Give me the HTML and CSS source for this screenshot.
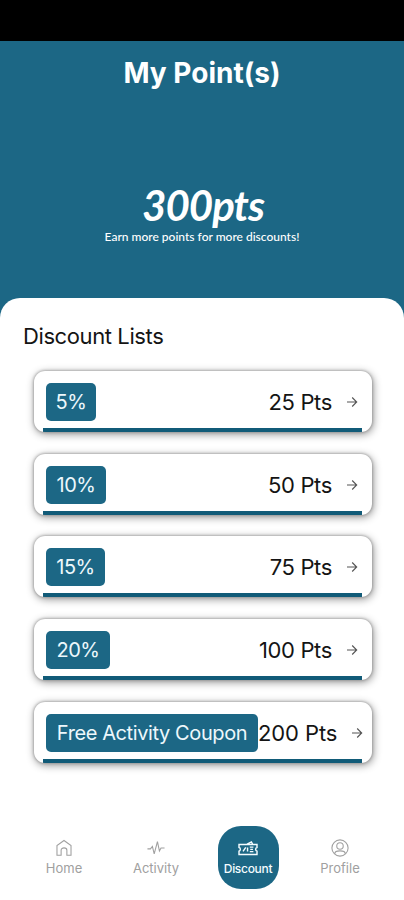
FILE: index.html
```
<!DOCTYPE html>
<html lang="en">
<head>
<meta charset="utf-8">
<title>My Point(s)</title>
<link rel="stylesheet" href="styles.css">
</head>
<body>
<svg class="defs" width="0" height="0"><symbol id="arrow" viewBox="0 0 12 12"><path d="M1 6h9.5M6.2 1.5L10.7 6l-4.5 4.5"/></symbol></svg>
<div class="status"></div>
<header class="hero">
  <h1>My Point(s)</h1>
  <div class="points">300pts</div>
  <p>Earn more points for more discounts!</p>
</header>
<main class="panel">
  <h2>Discount Lists</h2>
  <div class="list">
    <div class="card"><span class="tag five">5%</span><span class="cost">25 Pts</span><svg class="arrow"><use href="#arrow"/></svg></div>
    <div class="card"><span class="tag ten">10%</span><span class="cost">50 Pts</span><svg class="arrow"><use href="#arrow"/></svg></div>
    <div class="card"><span class="tag fifteen">15%</span><span class="cost">75 Pts</span><svg class="arrow"><use href="#arrow"/></svg></div>
    <div class="card"><span class="tag twenty">20%</span><span class="cost">100 Pts</span><svg class="arrow"><use href="#arrow"/></svg></div>
    <div class="card wide"><span class="tag coupon">Free Activity Coupon</span><span class="cost">200 Pts</span><svg class="arrow"><use href="#arrow"/></svg></div>
  </div>
</main>
<nav>
  <a class="item home"><svg viewBox="0 0 20 20"><path d="M2.2 18V7.3L10 1.6l7.8 5.7V18h-4.6v-5.6c0-3.4-6.4-3.4-6.4 0V18z"/></svg><span>Home</span></a>
  <a class="item activity"><svg viewBox="0 0 20 20"><path d="M.5 11h3.3L6 8.2l2 8.3L11.6 3l2.2 10.2L15.6 10h3.9"/></svg><span>Activity</span></a>
  <a class="item active"><svg viewBox="0 0 22 20"><path d="M1 6.2h20v3.2c-2 .3-2 3.9 0 4.2v3.6H1v-3.6c2-.3 2-3.9 0-4.2zM10 5.8l4.8-2.6 1.4 2.6M5.5 13.8l3-4.6M10.5 9.5v4.5M13 9h4M13.5 11.5h3M13 14h4"/></svg><span>Discount</span></a>
  <a class="item profile"><svg viewBox="0 0 20 20"><circle cx="10" cy="10" r="9"/><circle cx="10" cy="7.8" r="3.6"/><path d="M4 16.5c.3-4.4 11.7-4.4 12 0"/></svg><span>Profile</span></a>
</nav>
</body>
</html>
```
FILE: styles.css
```
* { box-sizing: border-box; }
body { margin: 0; width: 404px; height: 900px; overflow: hidden; background: #1c6785; font-family: Inter, "Liberation Sans", sans-serif; color: #141414; display: flex; flex-direction: column; }
h1, h2, p { margin: 0; }
svg { fill: none; stroke: currentColor; }
.defs { position: absolute; }
.status { height: 41px; background: #000; flex: none; }
.hero { height: 257px; flex: none; color: #fff; text-align: center; }
h1 { font-size: 28px; line-height: 34px; font-weight: 700; letter-spacing: 0; padding-top: 15px; }
.points { font: italic 700 42px/50px Lato, sans-serif; letter-spacing: -1px; margin-top: 90px; padding-left: 2px; }
.hero p { font: 500 12px/14px Lato, sans-serif; }
.panel { height: 522px; flex: none; background: #fff; border-radius: 20px 20px 0 0; padding: 24px 32px 0 34px; }
h2 { font-size: 22px; line-height: 28px; font-weight: 400; letter-spacing: -.4px; margin-left: -11px; }
.list { margin-top: 21px; display: grid; grid-auto-rows: 61px; row-gap: 21.7px; }
.card { display: flex; align-items: center; border-radius: 11px; padding: 1px 14px 0 12px; background: linear-gradient(#115b78, #115b78) 9px 57px / 319px 4px no-repeat #fff; box-shadow: 0 0 3px #888, 1px 2px 8px rgba(0,0,0,.45); }
.tag { width: 50px; height: 38px; border-radius: 5px; background: #1c6785; color: #edf8fc; font-size: 20px; line-height: 39px; font-weight: 400; letter-spacing: -.5px; text-align: center; white-space: nowrap; flex: none; }
.ten { width: 60px; }
.fifteen { width: 59px; }
.twenty { width: 64px; }
.coupon { width: 212px; letter-spacing: -.4px; }
.cost { margin-left: auto; font-size: 22px; letter-spacing: -.35px; white-space: nowrap; }
.arrow { width: 12px; height: 12px; margin-left: 14px; color: #555; stroke-width: 1.1; flex: none; }
.wide { padding-right: 9px; }
.wide .cost { letter-spacing: -.1px; margin-left: 0; }
.wide .arrow { margin-left: auto; }
nav { height: 80px; flex: none; background: #fff; display: grid; grid-template-columns: repeat(4, 92px); justify-content: center; }
.item { display: flex; flex-direction: column; align-items: center; padding-top: 19px; color: #a0a0a0; font-size: 13px; line-height: 16px; }
.item svg { width: 18px; height: 18px; stroke-width: 1.2; margin-bottom: 3px; }
.active { width: 61px; height: 63px; margin-top: 6px; justify-self: center; border-radius: 23px; background: #1c6785; color: #f4fcff; padding-top: 13px; font-size: 12px; font-weight: 500; letter-spacing: -.3px; }
.active svg { width: 20px; height: 18px; stroke-width: 1.6; margin-bottom: 4px; }
```
